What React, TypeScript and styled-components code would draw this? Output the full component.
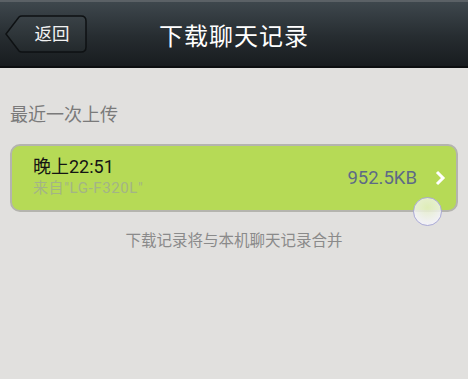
import { createGlobalStyle } from "styled-components";
import styled from "styled-components";

const GlobalStyle = createGlobalStyle`
  html, body {
    margin: 0;
    padding: 0;
    background: #e1e0de;
  }
  body {
    font-family: Roboto, "Noto Sans CJK SC", "Noto Sans", sans-serif;
  }
`;

const Page = styled.div`
  width: 468px;
  height: 379px;
  overflow: hidden;
  background: #e1e0de;
`;

const TitleBar = styled.header`
  position: relative;
  height: 64px;
  display: flex;
  align-items: center;
  justify-content: center;
  border-top: 2px solid #5b6166;
  border-bottom: 2px solid #0c0e10;
  background: linear-gradient(#3e474d, #262c30 55%, #181c1f);
`;

const BackButton = styled.button`
  position: absolute;
  left: 5px;
  top: 13px;
  width: 82px;
  height: 38px;
  padding: 0 0 0 12px;
  border: none;
  background: transparent;
  color: #f2f2f2;
  font: inherit;
  font-size: 17.5px;
  cursor: pointer;
`;

const BackShape = styled.svg`
  position: absolute;
  inset: 0;
`;

const BackLabel = styled.span`
  position: relative;
  line-height: 38px;
`;

const Title = styled.h1`
  margin: 0;
  color: #ffffff;
  font-size: 24px;
  font-weight: 400;
  letter-spacing: 1px;
`;

const Content = styled.main`
  padding: 34px 10px 0;
`;

const SectionLabel = styled.div`
  color: #7a7a7a;
  font-size: 18px;
  line-height: 26px;
`;

const RecordCard = styled.div`
  position: relative;
  margin-top: 16px;
  height: 64px;
  display: flex;
  align-items: center;
  padding: 0 10px 0 21px;
  border: 2px solid #b4b4ae;
  border-radius: 10px;
  background: #b6da56;
`;

const RecordText = styled.div`
  flex: 1;
  display: flex;
  flex-direction: column;
`;

const RecordTime = styled.div`
  color: #141414;
  font-size: 18px;
  line-height: 22px;
  margin-top: -3px;
`;

const RecordSource = styled.div`
  color: #a3b486;
  font-size: 15px;
  line-height: 20px;
  letter-spacing: 0.6px;
`;

const RecordSize = styled.div`
  color: #5d6a86;
  font-size: 18.5px;
  margin-right: 17px;
`;

const Chevron = styled.svg`
  display: block;
`;

const TouchSpot = styled.div`
  position: absolute;
  right: 14px;
  bottom: -16px;
  width: 27px;
  height: 27px;
  border-radius: 50%;
  border: 1.5px solid #a9a9d6;
  background: radial-gradient(circle at 50% 35%, rgba(230, 240, 200, 0.85), rgba(245, 245, 250, 0.8) 70%);
`;

const Note = styled.div`
  margin-top: 16px;
  text-align: center;
  color: #8a8a8a;
  font-size: 15.5px;
`;

export default function App() {
  return (
    <Page>
      <GlobalStyle />
      <TitleBar>
        <BackButton>
          <BackShape width="82" height="38" viewBox="0 0 82 38">
            <defs>
              <linearGradient id="backFill" x1="0" y1="0" x2="0" y2="1">
                <stop offset="0" stopColor="#3a4247" />
                <stop offset="1" stopColor="#23292c" />
              </linearGradient>
            </defs>
            <path
              d="M1 19 L14 2 Q15 1 17 1 L76 1 Q81 1 81 6 L81 32 Q81 37 76 37 L17 37 Q15 37 14 36 Z"
              fill="url(#backFill)"
              stroke="#0e1113"
              strokeWidth="1.5"
            />
          </BackShape>
          <BackLabel>返回</BackLabel>
        </BackButton>
        <Title>下载聊天记录</Title>
      </TitleBar>
      <Content>
        <SectionLabel>最近一次上传</SectionLabel>
        <RecordCard>
          <RecordText>
            <RecordTime>晚上22:51</RecordTime>
            <RecordSource>来自"LG-F320L"</RecordSource>
          </RecordText>
          <RecordSize>952.5KB</RecordSize>
          <Chevron width="12" height="16" viewBox="0 0 12 16">
            <path d="M3 2 L9 8 L3 14" fill="none" stroke="#ffffff" strokeWidth="3" />
          </Chevron>
          <TouchSpot />
        </RecordCard>
        <Note>下载记录将与本机聊天记录合并</Note>
      </Content>
    </Page>
  );
}
